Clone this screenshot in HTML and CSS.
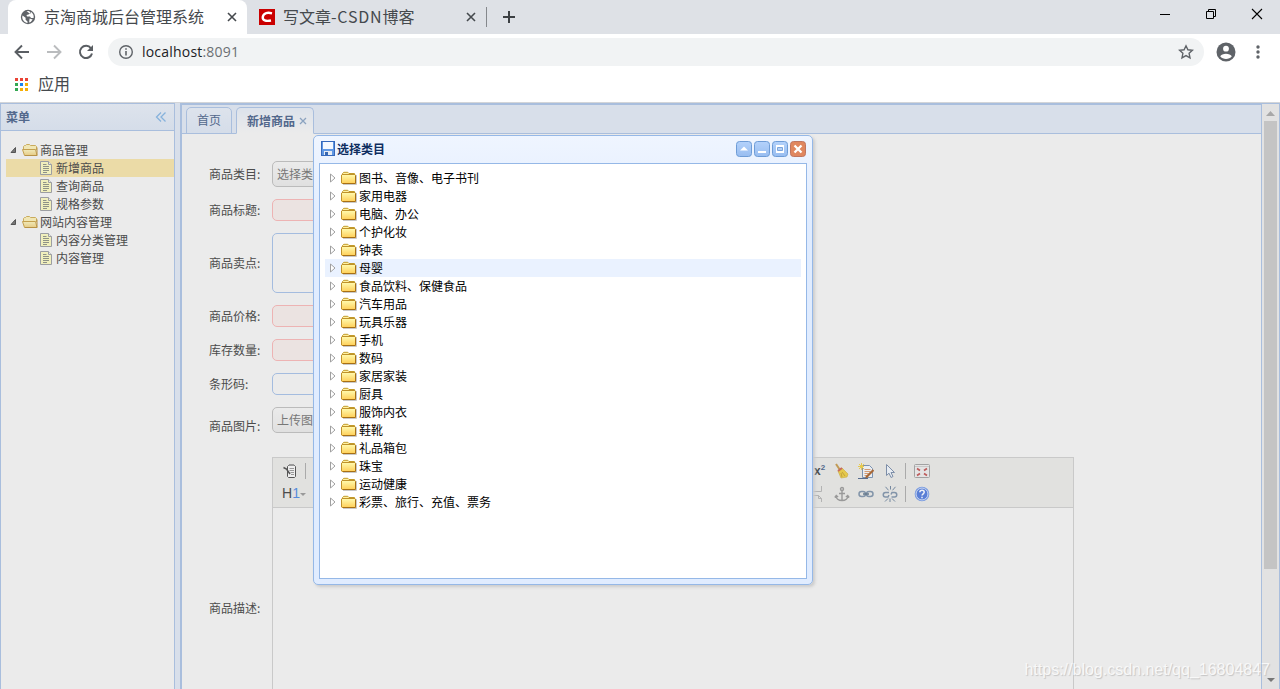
FILE: index.html
```html
<!DOCTYPE html>
<html lang="zh-CN">
<head>
    <meta charset="UTF-8">
    <title>京淘商城后台管理系统</title>
    <link rel="stylesheet" href="styles.css">
</head>
<body>

<svg class="defs" width="0" height="0">
    <defs>
        <linearGradient id="gold" x1="0" y1="0" x2="0" y2="1">
            <stop offset="0" stop-color="#fffbb0"/>
            <stop offset="1" stop-color="#ffcf58"/>
        </linearGradient>
        <linearGradient id="goldDim" x1="0" y1="0" x2="0" y2="1">
            <stop offset="0" stop-color="#f0eaba"/>
            <stop offset="1" stop-color="#e6cb86"/>
        </linearGradient>
        <linearGradient id="blueBtn" x1="0" y1="0" x2="0" y2="1">
            <stop offset="0" stop-color="#b4d2fb"/>
            <stop offset="1" stop-color="#98bdf0"/>
        </linearGradient>
    </defs>
    <symbol id="folder" viewBox="0 0 16 16">
        <path d="M2 14.500h13.500V5" fill="none" stroke="#c9c9c9"/>
        <path d="M1.500 5V3.500L2.800 2.300h4L8 3.500h5.500v2" fill="#fff0a0" stroke="#c19a2a"/>
        <path d="M.5 5l.5-.5h13l.5.5v8l-.5.5H1l-.5-.5z" fill="url(#gold)" stroke="#c0922a"/>
        <path d="M14.500 6v7.500H2" fill="none" stroke="#a87014"/>
    </symbol>
    <symbol id="folder-open" viewBox="0 0 16 16">
        <path d="M1.500 8V4.500l1-1h1l1-1h3l1 1h5l1 1V8" fill="#f0e6b4" stroke="#c9ab5c"/>
        <path d="M.5 7.500h13l1.500 6H2.500z" fill="url(#goldDim)" stroke="#c4a04f"/>
        <path d="M15 5.500v8H3" fill="none" stroke="#b89246"/>
    </symbol>
    <symbol id="doc" viewBox="0 0 16 16">
        <path d="M2.500 1.500h8l3 3v10h-11z" fill="#f0efbc" stroke="#9c9ea2"/>
        <path d="M10.500 1.500v3h3" fill="#e8e8e8" stroke="#9c9ea2"/>
        <path d="M5 4.500h3.500M5 6.500h6M5 8.500h6M5 10.500h6M5 12.500h4" stroke="#8e9287"/>
    </symbol>
    <symbol id="arrow" viewBox="0 0 16 16">
        <path d="M5.500 4v8l4.500-4z" fill="#fff" stroke="#a0a0a0"/>
    </symbol>
    <symbol id="arrow-open" viewBox="0 0 16 16">
        <path d="M9.500 5.500v5H5z" fill="#777" stroke="#555"/>
    </symbol>
</svg>

<!-- browser -->
<div class="tabstrip">
    <div class="browser-tab active">
        <svg class="favicon" viewBox="0 0 16 16">
            <circle cx="8" cy="8" r="7.200" fill="#5f6368"/>
            <path d="M2.600 6.500l3 2.300v2l1.900 1.700v1.400C4.500 13.600 2.300 11 2.200 8zM6.500 2.300L9 2l1.500 1.500L8.500 5.500l-2 .5.500 1.500h3l1 1.500h2.600c.5-2.600-.6-4.500-2.400-5.900l-1 1.600zM9.600 9.500l1.500.6 1.600.4-2 2.500-1.600.4z" fill="#fff"/>
        </svg>
        <span class="tab-title">京淘商城后台管理系统</span>
        <svg class="tab-x" viewBox="0 0 10 10"><path d="M1 1l8 8M9 1l-8 8" stroke="#45494d" stroke-width="1.600"/></svg>
    </div>
    <div class="browser-tab">
        <svg class="favicon" viewBox="0 0 16 16">
            <rect width="16" height="16" fill="#ca0000"/>
            <path d="M13 4.300C9 3.300 4.600 3.500 3.800 7.800c-.6 3.700 3 4.700 8.200 3.700" fill="none" stroke="#fff" stroke-width="2.400"/>
        </svg>
        <span class="tab-title">写文章<span class="latin">-CSDN</span>博客</span>
        <svg class="tab-x" viewBox="0 0 10 10"><path d="M1 1l8 8M9 1l-8 8" stroke="#45494d" stroke-width="1.600"/></svg>
    </div>
    <div class="tab-divider"></div>
    <svg class="new-tab" viewBox="0 0 12 12"><path d="M6 0v12M0 6h12" stroke="#3c4043" stroke-width="2"/></svg>
    <div class="window-buttons">
        <svg width="12" height="12" viewBox="0 0 12 12"><path d="M1 6.500h10" stroke="#000"/></svg>
        <svg width="12" height="12" viewBox="0 0 12 12" fill="none" stroke="#000"><path d="M1.500 3.500h7v7h-7zM3.500 3.500v-2h7v7h-2"/></svg>
        <svg width="12" height="12" viewBox="0 0 12 12"><path d="M1 1l10 10M11 1L1 11" stroke="#000" stroke-width="1.100"/></svg>
    </div>
</div>

<div class="navbar">
    <svg class="nav-icon" viewBox="0 0 16 16" fill="none" stroke="#5a5e63" stroke-width="1.900"><path d="M15 8H2M8 1.500L1.500 8 8 14.500"/></svg>
    <svg class="nav-icon" viewBox="0 0 16 16" fill="none" stroke="#babcbe" stroke-width="1.900"><path d="M1 8h13M8 1.500L14.500 8 8 14.500"/></svg>
    <svg class="nav-icon" viewBox="0 0 16 16"><path d="M13 4.300A6.100 6.100 0 1 0 14 9.500" fill="none" stroke="#5a5e63" stroke-width="2"/><path d="M15 1v6H9z" fill="#5a5e63"/></svg>
    <div class="address">
        <svg width="16" height="16" viewBox="0 0 16 16"><circle cx="8" cy="8" r="6.300" fill="none" stroke="#5f6368" stroke-width="1.400"/><path d="M8 7v4.500M8 4.200v1.600" stroke="#5f6368" stroke-width="1.600"/></svg>
        <span class="url">localhost<span class="port">:8091</span></span>
        <svg class="star" viewBox="0 0 16 16"><path d="M8 1.800l1.900 4 4.500.5-3.300 3 .9 4.500L8 11.600l-4 2.200.9-4.500-3.300-3 4.500-.5z" fill="none" stroke="#5f6368" stroke-width="1.400"/></svg>
    </div>
    <svg class="avatar" viewBox="0 0 20 20"><circle cx="10" cy="10" r="9.500" fill="#5f6368"/><circle cx="10" cy="6.700" r="2.900" fill="#fff"/><path d="M4.200 14.200c1.500-3.400 10-3.400 11.600 0-2.500 3.600-9 3.600-11.600 0z" fill="#fff"/></svg>
    <svg class="dots" viewBox="0 0 4 14" fill="#5f6368"><circle cx="2" cy="2" r="1.700"/><circle cx="2" cy="7" r="1.700"/><circle cx="2" cy="12" r="1.700"/></svg>
</div>

<div class="bookmarks">
    <svg width="13" height="13" viewBox="0 0 13 13">
        <path d="M0 0h3v3H0zM5 0h3v3H5zM10 0h3v3h-3z" fill="#ea4335"/>
        <path d="M0 5h3v3H0zM0 10h3v3H0z" fill="#34a853"/>
        <path d="M5 5h3v3H5z" fill="#1a83f0"/>
        <path d="M10 5h3v3h-3zM5 10h3v3H5zM10 10h3v3h-3z" fill="#f6ae05"/>
    </svg>
    <span>应用</span>
</div>

<!-- page -->
<div class="layout">
    <div class="west">
        <div class="panel-header">
            <span>菜单</span>
            <svg width="12" height="12" viewBox="0 0 12 12" fill="none" stroke="#86b2dc" stroke-width="1.300"><path d="M6 1.500L1.500 6 6 10.500M10.500 1.500L6 6l4.500 4.500"/></svg>
        </div>
        <ul class="tree menu">
            <li><svg><use href="#arrow-open"/></svg><svg><use href="#folder-open"/></svg><span>商品管理</span></li>
            <li class="child selected"><svg><use href="#doc"/></svg><span>新增商品</span></li>
            <li class="child"><svg><use href="#doc"/></svg><span>查询商品</span></li>
            <li class="child"><svg><use href="#doc"/></svg><span>规格参数</span></li>
            <li><svg><use href="#arrow-open"/></svg><svg><use href="#folder-open"/></svg><span>网站内容管理</span></li>
            <li class="child"><svg><use href="#doc"/></svg><span>内容分类管理</span></li>
            <li class="child"><svg><use href="#doc"/></svg><span>内容管理</span></li>
        </ul>
    </div>

    <div class="center">
        <div class="tabs">
            <div class="tab">首页</div>
            <div class="tab tab-selected">新增商品<svg width="8" height="8" viewBox="0 0 8 8"><path d="M1 1l6 6M7 1L1 7" stroke="#8ba3c0" stroke-width="1.300"/></svg></div>
        </div>
        <div class="form">
            <div class="row row-button"><label>商品类目:</label><a class="btn">选择类目</a></div>
            <div class="row"><label>商品标题:</label><div class="input invalid"></div></div>
            <div class="row row-area"><label>商品卖点:</label><div class="input textarea"></div></div>
            <div class="row"><label>商品价格:</label><div class="input invalid short"></div></div>
            <div class="row"><label>库存数量:</label><div class="input invalid short"></div></div>
            <div class="row"><label>条形码:</label><div class="input short"></div></div>
            <div class="row row-upload"><label>商品图片:</label><a class="btn">上传图片</a></div>
            <div class="row row-editor"><label>商品描述:</label>
                <div class="editor">
                    <div class="toolbar">
                        <div class="tools">
                            <svg class="tool" viewBox="0 0 16 16"><path d="M5.500 3.500l1-1h6l1 1v10l-1 1h-6l-1-1z" fill="#eee" stroke="#555"/><path d="M7 2h5" stroke="#999" stroke-width="2"/><path d="M7.500 5.500H12M7.500 7.500H12M8.500 9.500H12M9 11.500h3" stroke="#999"/><path d="M1.500 4.500l3 1.500L8 11" fill="none" stroke="#555" stroke-width="1.500"/></svg>
                            <i class="sep"></i>
                            <div class="tools tools-right">
                                <span class="sup">x<small>2</small></span>
                                <svg class="tool" viewBox="0 0 16 16"><path d="M2 1l4 6" stroke="#c19a55" stroke-width="2"/><path d="M4 8l4-3 6 6-1 3-6 1z" fill="#e5c94c" stroke="#c8aa42" stroke-width=".6"/><path d="M4 8l4-3" stroke="#c86c5c" stroke-width="2"/><path d="M8 9l3 4M7 10l1 4" stroke="#c3a23c"/></svg>
                                <svg class="tool" viewBox="0 0 16 16"><path d="M4.500 2.500h7l3 3v9h-10z" fill="#e9edf2" stroke="#7b92b0"/><path d="M6.500 6.500h6M6.500 8.500h6M6.500 10.500h4M6.500 12.500h3" stroke="#d49b74"/><path d="M0 3.500h6M3.500 0v7M1 1l5 5M6 1L1 6" stroke="#e6c94f"/><path d="M15.500 7L9 13.500l-1 1.500" stroke="#a76838" stroke-width="2.200"/><path d="M0 15.500h10" stroke="#556b8f"/></svg>
                                <svg class="tool" viewBox="0 0 16 16"><path d="M4.500 1.500v11l2.500-2.300 2 4.300 2-1-2-4h3.500z" fill="#e6ebf1" stroke="#7d8ea8"/></svg>
                                <i class="sep"></i>
                                <svg class="tool" viewBox="0 0 16 16"><rect x=".5" y="1.500" width="15" height="13" rx="1" fill="#e4e4e4" stroke="#a2a2a2"/><path d="M1 3.500h14" stroke="#c8c8c8"/><path d="M3 5.500l3 2M13 5.500l-3 2M3 12.500l3-2M13 12.500l-3-2" stroke="#bd5b5b" stroke-width="1.700"/></svg>
                            </div>
                        </div>
                        <div class="tools">
                            <span class="heading">H<b>1</b></span>
                            <svg class="caret" viewBox="0 0 6 4"><path d="M0 0h6L3 3z" fill="#999"/></svg>
                            <div class="tools tools-right">
                                <svg class="tool" viewBox="0 0 16 16" fill="none" stroke="#b3b3b3"><path d="M.5 0v5.500h11V0M.5 16V9.500h8l3 3V16M8.500 9.500v3h3"/></svg>
                                <svg class="tool" viewBox="0 0 16 16" fill="none" stroke="#999" stroke-width="1.400"><circle cx="8" cy="3" r="1.500"/><path d="M8 5v10M5 7.500h6M2 9.500c0 3 2.500 5 6 5s6-2 6-5M.8 11.500l1.500-2 1.800 1.500M15.200 11.500l-1.500-2-1.800 1.500"/></svg>
                                <svg class="tool" viewBox="0 0 16 16" fill="none" stroke="#8294a9" stroke-width="1.500"><rect x="1" y="5.500" width="6.500" height="5" rx="2.500"/><rect x="8.500" y="5.500" width="6.500" height="5" rx="2.500"/><path d="M5 8h6" stroke="#66788d"/></svg>
                                <svg class="tool" viewBox="0 0 16 16" fill="none" stroke="#8294a9" stroke-width="1.500"><path d="M7 6.500H3.500a2.200 2.200 0 0 0 0 4.500H6l1-2M9.500 11h3a2.200 2.200 0 0 0 0-4.500H10l-1 2"/><path d="M8.500 0v3.500M8 12.500V16M3.500.8l3 3.500M13.500.8l-3 3.500M3 15.500l3-3M13 15.500l-3-3" stroke-width="1" stroke="#75889f"/></svg>
                                <i class="sep"></i>
                                <svg class="tool" viewBox="0 0 16 16"><circle cx="8" cy="8" r="6.700" fill="#5a7fd6" stroke="#7c9de0" stroke-width="1.300"/><circle cx="8" cy="8" r="5.900" fill="none" stroke="#dce3f2" stroke-width=".8"/><path d="M5.800 6.200c.2-2.500 4.400-2.400 4.400 0C10.200 7.800 8 7.800 8 9.600M8 10.700v1.500" fill="none" stroke="#eef1f8" stroke-width="1.500"/></svg>
                            </div>
                        </div>
                    </div>
                </div>
            </div>
        </div>
    </div>

    <div class="scrollbar">
        <svg width="9" height="5" viewBox="0 0 9 5"><path d="M4.500 0L9 5H0z" fill="#a8a8a8"/></svg>
        <div class="thumb"></div>
        <svg class="down" width="8" height="4" viewBox="0 0 8 4"><path d="M0 0h8L4 4z" fill="#777"/></svg>
    </div>
</div>

<div class="window">
    <div class="window-header">
        <svg width="14" height="15" viewBox="0 0 14 15"><rect x=".5" y=".5" width="13" height="14" fill="#5f97e3" stroke="#3568bb"/><rect x="2" y="1" width="10" height="7" fill="#f4f8ff"/><path d="M3 10h8v4H3z" fill="#e6ebf3"/><path d="M4 11h3v3H4z" fill="#3767b0"/></svg>
        <span class="window-title">选择类目</span>
        <div class="window-tools">
            <svg viewBox="0 0 16 16"><rect x=".5" y=".5" width="15" height="15" rx="3" fill="url(#blueBtn)" stroke="#6e9cd6"/><path d="M4 9.500h8L8 5.500z" fill="#fff"/></svg>
            <svg viewBox="0 0 16 16"><rect x=".5" y=".5" width="15" height="15" rx="3" fill="url(#blueBtn)" stroke="#6e9cd6"/><path d="M4 10h8v2H4z" fill="#fff"/></svg>
            <svg viewBox="0 0 16 16"><rect x=".5" y=".5" width="15" height="15" rx="3" fill="url(#blueBtn)" stroke="#6e9cd6"/><path d="M4 4h8v8H4z" fill="#fff"/><path d="M5.500 6.500h5v3h-5z" fill="#b4d0f6" stroke="#7ba4dc"/></svg>
            <svg viewBox="0 0 16 16"><rect x=".5" y=".5" width="15" height="15" rx="3" fill="#e0875f" stroke="#bf7560"/><path d="M4.500 4.500l7 7M11.500 4.500l-7 7" stroke="#fff" stroke-width="2.300"/></svg>
        </div>
    </div>
    <div class="window-body">
        <ul class="tree">
            <li><svg><use href="#arrow"/></svg><svg><use href="#folder"/></svg><span>图书、音像、电子书刊</span></li>
            <li><svg><use href="#arrow"/></svg><svg><use href="#folder"/></svg><span>家用电器</span></li>
            <li><svg><use href="#arrow"/></svg><svg><use href="#folder"/></svg><span>电脑、办公</span></li>
            <li><svg><use href="#arrow"/></svg><svg><use href="#folder"/></svg><span>个护化妆</span></li>
            <li><svg><use href="#arrow"/></svg><svg><use href="#folder"/></svg><span>钟表</span></li>
            <li class="hover"><svg><use href="#arrow"/></svg><svg><use href="#folder"/></svg><span>母婴</span></li>
            <li><svg><use href="#arrow"/></svg><svg><use href="#folder"/></svg><span>食品饮料、保健食品</span></li>
            <li><svg><use href="#arrow"/></svg><svg><use href="#folder"/></svg><span>汽车用品</span></li>
            <li><svg><use href="#arrow"/></svg><svg><use href="#folder"/></svg><span>玩具乐器</span></li>
            <li><svg><use href="#arrow"/></svg><svg><use href="#folder"/></svg><span>手机</span></li>
            <li><svg><use href="#arrow"/></svg><svg><use href="#folder"/></svg><span>数码</span></li>
            <li><svg><use href="#arrow"/></svg><svg><use href="#folder"/></svg><span>家居家装</span></li>
            <li><svg><use href="#arrow"/></svg><svg><use href="#folder"/></svg><span>厨具</span></li>
            <li><svg><use href="#arrow"/></svg><svg><use href="#folder"/></svg><span>服饰内衣</span></li>
            <li><svg><use href="#arrow"/></svg><svg><use href="#folder"/></svg><span>鞋靴</span></li>
            <li><svg><use href="#arrow"/></svg><svg><use href="#folder"/></svg><span>礼品箱包</span></li>
            <li><svg><use href="#arrow"/></svg><svg><use href="#folder"/></svg><span>珠宝</span></li>
            <li><svg><use href="#arrow"/></svg><svg><use href="#folder"/></svg><span>运动健康</span></li>
            <li><svg><use href="#arrow"/></svg><svg><use href="#folder"/></svg><span>彩票、旅行、充值、票务</span></li>
        </ul>
    </div>
</div>

<div class="watermark">https://blog.csdn.net/qq_16804847</div>

</body>
</html>
```
FILE: styles.css
```css
* {
    box-sizing: border-box;
}

body {
    margin: 0;
    height: 689px;
    overflow: hidden;
    position: relative;
    display: flex;
    flex-direction: column;
    background: #fff;
    font-family: "Noto Sans CJK SC", sans-serif;
    font-size: 12px;
    color: #4c4c4c;
}

svg {
    flex: none;
    display: block;
}

.defs {
    position: absolute;
}

/* browser */
.tabstrip {
    height: 34px;
    flex: none;
    display: flex;
    align-items: center;
    padding-left: 8px;
    background: #dee1e6;
}

.browser-tab {
    width: 239px;
    height: 34px;
    display: flex;
    align-items: center;
    padding: 0 10px 0 12px;
    font-size: 16px;
    color: #45494d;
}

.browser-tab.active {
    background: #fff;
    border-radius: 8px 8px 0 0;
}

.favicon {
    width: 16px;
    height: 16px;
}

.tab-title {
    margin-left: 8px;
    padding-bottom: 2px;
    line-height: 32px;
    white-space: nowrap;
}

.latin {
    letter-spacing: 0.8px;
}

.tab-x {
    width: 10px;
    height: 10px;
    margin-left: auto;
}

.tab-divider {
    width: 1px;
    height: 20px;
    background: #85888c;
}

.new-tab {
    width: 12px;
    height: 12px;
    margin-left: 16px;
}

.window-buttons {
    display: flex;
    gap: 34px;
    margin: -6px 17px 0 auto;
}

.navbar {
    height: 36px;
    flex: none;
    display: flex;
    align-items: center;
    padding-left: 14px;
}

.nav-icon {
    width: 16px;
    height: 16px;
    margin-right: 16px;
}

.address {
    width: 1096px;
    height: 28px;
    display: flex;
    align-items: center;
    margin-left: -2px;
    padding: 0 10px;
    border-radius: 14px;
    background: #f1f3f4;
}

.url {
    margin-left: 8px;
    padding-bottom: 2px;
    font-family: "Open Sans", sans-serif;
    font-size: 14px;
    letter-spacing: 0.2px;
    color: #202124;
}

.port {
    color: #6b6f73;
}

.star {
    width: 16px;
    height: 16px;
    margin-left: auto;
}

.avatar {
    width: 20px;
    height: 20px;
    margin-left: 12px;
}

.dots {
    width: 4px;
    height: 14px;
    margin-left: 20px;
}

.bookmarks {
    height: 33px;
    flex: none;
    display: flex;
    align-items: center;
    gap: 10px;
    padding: 0 0 6px 15px;
    font-size: 16px;
    color: #45494d;
    border-bottom: 1px solid #d3d5d8;
}

.bookmarks svg {
    margin-top: 3px;
}

/* layout */
.layout {
    flex: 1;
    min-height: 0;
    display: flex;
    background: #d8dfea;
}

.west {
    width: 175px;
    flex: none;
    background: #ebebeb;
    border: 1px solid #a9bedd;
    border-bottom: 0;
}

.panel-header {
    height: 27px;
    display: flex;
    align-items: center;
    justify-content: space-between;
    padding: 0 7px 1px 5px;
    font-weight: bold;
    color: #52688c;
    background: linear-gradient(#dde3ec, #d5dde9);
    border-bottom: 1px solid #a9bedd;
}

.tree {
    list-style: none;
    margin: 0;
    padding: 5px;
    color: #000;
}

.tree li {
    height: 18px;
    display: flex;
    align-items: center;
    line-height: 18px;
    white-space: nowrap;
}

.tree svg {
    width: 16px;
    height: 16px;
}

.tree span {
    margin-left: 2px;
}

.menu {
    padding: 10px 0 0 5px;
    color: #4c4c4c;
}

.tree .child {
    padding-left: 32px;
}

.tree .selected {
    background: #ebdba7;
}

.tree .hover {
    background: #eaf2ff;
}

.center {
    width: 1082px;
    margin-left: 5px;
    display: flex;
    flex-direction: column;
    background: #ebebeb;
    border: 1px solid #a9bedd;
    border-width: 2px 1px 0 2px;
}

.tabs {
    height: 29px;
    flex: none;
    display: flex;
    gap: 4px;
    padding: 2px 0 0 4px;
    background: #d8dfea;
    border-bottom: 1px solid #a9bedd;
}

.tab {
    height: 27px;
    padding: 0 10px;
    line-height: 24px;
    color: #52688c;
    background: linear-gradient(#dde3ec, #d5dde9);
    border: 1px solid #a9bedd;
    border-radius: 5px 5px 0 0;
}

.tab-selected {
    display: flex;
    align-items: center;
    padding-right: 6px;
    font-weight: bold;
    background: linear-gradient(#dce2eb, #ebebeb);
    border-bottom-color: #ebebeb;
}

.tab svg {
    margin-left: 4px;
}

.form {
    flex: 1;
    min-height: 0;
    overflow: hidden;
    padding: 21px 0 0 27px;
}

.row {
    height: 34px;
    display: flex;
    align-items: center;
}

.row label {
    width: 63px;
    flex: none;
    padding-bottom: 2px;
}

.row-button {
    height: 38px;
}

.row-area {
    height: 72px;
}

.row-upload {
    height: 50px;
}

.row-upload .btn {
    margin-bottom: 12px;
}

.row-editor {
    height: 314px;
}

.btn {
    height: 26px;
    padding: 0 4px;
    line-height: 24px;
    color: #777;
    background: linear-gradient(#ebebeb, #e0e0e0);
    border: 1px solid #bbb;
    border-radius: 5px;
}

.input {
    width: 280px;
    height: 22px;
    background: #ebebeb;
    border: 1px solid #a4bcdf;
    border-radius: 5px;
}

.input.short {
    width: 160px;
}

.invalid {
    background: #ebe3e1;
    border-color: #edb3b3;
}

.textarea {
    height: 60px;
}

/* rich text editor */
.editor {
    width: 802px;
    height: 302px;
    border: 1px solid #c9c9c9;
}

.toolbar {
    height: 50px;
    padding: 1px 0 0 9px;
    background: #e1e1df;
    border-bottom: 1px solid #c9c9c9;
}

.tools {
    height: 23px;
    display: flex;
    align-items: center;
}

.tool {
    width: 16px;
    height: 16px;
    margin-right: 8px;
}

.sep {
    width: 1px;
    height: 16px;
    background: #aaa;
    margin-right: 8px;
    margin-left: -1px;
}

.tools-right {
    width: 263px;
    margin-left: auto;
}

.sup {
    display: flex;
    width: 16px;
    margin-right: 8px;
    padding-left: 4px;
    font: bold 12px/16px "Liberation Sans", sans-serif;
}

.sup small {
    font-size: 8px;
    line-height: 10px;
    color: #52688c;
}

.heading {
    font: 14px/23px "Liberation Sans", sans-serif;
}

.heading b {
    font-weight: normal;
    color: #568bdc;
}

.caret {
    width: 6px;
    height: 4px;
    margin-top: 3px;
}

.scrollbar {
    width: 18px;
    flex: none;
    display: flex;
    flex-direction: column;
    align-items: center;
    padding: 7px 0 7px;
    background: #e2e2e2;
    border: 1px solid #a9bedd;
    border-width: 1px 1px 0 0;
}

.thumb {
    width: 13px;
    height: 448px;
    margin-top: 5px;
    background: #c4c4c4;
}

.down {
    margin-top: auto;
}

/* category dialog */
.window {
    position: absolute;
    left: 313px;
    top: 135px;
    width: 500px;
    height: 450px;
    display: flex;
    flex-direction: column;
    padding: 5px;
    background: linear-gradient(#eff5ff, #e0ecff 20%);
    border: 1px solid #95b8e7;
    border-radius: 5px;
    box-shadow: 2px 2px 3px #ccc;
}

.window-header {
    height: 22px;
    flex: none;
    display: flex;
    padding-left: 2px;
    color: #0e2d5f;
    font-weight: bold;
}

.window-title {
    margin-left: 2px;
    line-height: 16px;
}

.window-tools {
    display: flex;
    gap: 2px;
    margin: 0 1px 0 auto;
}

.window-tools svg {
    width: 16px;
    height: 16px;
}

.window-body {
    flex: 1;
    background: #fff;
    border: 1px solid #95b8e7;
}

.watermark {
    position: absolute;
    right: 10px;
    bottom: 8px;
    font: 16px/22px "Liberation Sans", sans-serif;
    color: #f8f8f8;
    text-shadow: 1px 1px 1px #c4c4c4;
}
```
